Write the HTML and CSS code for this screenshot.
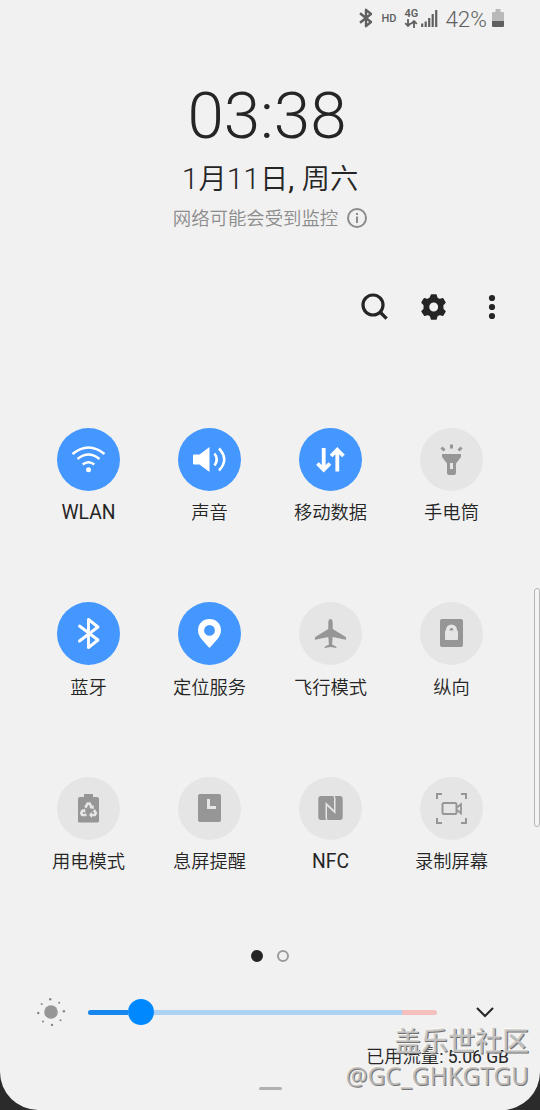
FILE: index.html
```html
<!DOCTYPE html>
<html lang="zh-CN">
<head>
<meta charset="utf-8">
<title>快捷面板</title>
<link rel="stylesheet" href="styles.css">
</head>
<body>
<main class="panel">
  <header class="status">
    <svg class="status-bt" width="16" height="20" viewBox="0 0 16 20"><path d="M2 5.200 13 14 8 18.200V1.800L13 6 2 14.800" fill="none" stroke="#606060" stroke-width="2.400" stroke-linejoin="round"/></svg>
    <span class="hd">HD</span>
    <div class="network">
      <span class="net-type">4G</span>
      <svg width="14" height="9" viewBox="0 0 14 9"><path d="M4 0v7M1.200 4.200 4 7l2.800-2.800M10 9V2M7.200 4.800 10 2l2.800 2.800" fill="none" stroke="#606060" stroke-width="1.800"/></svg>
    </div>
    <svg class="signal" width="17" height="17" viewBox="0 0 17 17"><path d="M1.200 17v-3.500M4.700 17v-5.500M8.200 17V8M11.700 17V4M15.200 17V0" stroke="#606060" stroke-width="2.200"/></svg>
    <span class="percent">42%</span>
    <svg class="battery" width="12" height="18" viewBox="0 0 12 18"><path d="M1 3h2.500V0h5v3H11q1 0 1 1v8H0V4q0-1 1-1" fill="#b9b9b9"/><path d="M0 12h12v5q0 1-1 1H1q-1 0-1-1z" fill="#606060"/></svg>
  </header>

  <section class="clock">
    <div class="time">03:38</div>
    <div class="date"><span class="num">1</span>月<span class="num">11</span>日<span class="num comma">, </span>周六</div>
    <div class="notice"><span>网络可能会受到监控</span>
      <svg width="20" height="20" viewBox="0 0 20 20"><circle cx="10" cy="10" r="9" fill="none" stroke="#8c8c8c" stroke-width="2"/><path d="M10 8.500V15M10 5v2" stroke="#8c8c8c" stroke-width="2"/></svg>
    </div>
  </section>

  <nav class="tools">
    <svg width="30" height="30" viewBox="0 0 30 30"><circle cx="13" cy="13" r="10" fill="none" stroke="#252525" stroke-width="3.200"/><path d="m20 20 6.600 6.600" stroke="#252525" stroke-width="3.400"/></svg>
    <svg width="30" height="30" viewBox="0 0 30 30"><path fill="#252525" fill-rule="evenodd" stroke="#252525" stroke-width="1.500" stroke-linejoin="round" d="M12.500 3h4.500l.9 3.200 2.500 1.500 3.400-.9 2.200 3.800-2.300 2.400v4l2.300 2.400-2.200 3.800-3.400-.9-2.500 1.500-.9 3.200h-4.500l-.9-3.200-2.500-1.500-3.400.9L3 19.400 5.300 17v-4L3 10.600l2.200-3.800 3.400.9 2.500-1.500zM14.700 9.800a5.200 5.200 0 1 0 0 10.400 5.200 5.200 0 0 0 0-10.400"/></svg>
    <svg width="30" height="30" viewBox="0 0 30 30"><g fill="#252525"><circle cx="15" cy="6" r="3.100"/><circle cx="15" cy="15" r="3.100"/><circle cx="15" cy="24" r="3.100"/></g></svg>
  </nav>

  <section class="tiles">
    <div class="tile"><span class="disc on"><svg viewBox="0 0 63 63"><g fill="none" stroke="#fff" stroke-width="2.500"><path d="M15.500 26Q31.500 13 47.500 26M20.500 31Q31.500 22 42.500 31M25.700 36.500Q31.500 32 37.300 36.500"/></g><circle cx="31.500" cy="41.700" r="2.500" fill="#fff"/></svg></span><span class="label latin">WLAN</span></div>
    <div class="tile"><span class="disc on"><svg viewBox="0 0 63 63"><path d="M16 26.500h5.500L31.500 19v25l-10-7.500H16q-1 0-1-1v-8q0-1 1-1" fill="#fff"/><path d="M36.500 25.500q4.500 6 0 12M41 20.500q10.500 11 0 22" fill="none" stroke="#fff" stroke-width="2.600"/></svg></span><span class="label">声音</span></div>
    <div class="tile"><span class="disc on"><svg viewBox="0 0 63 63"><path d="M24.700 20v21M18.500 35.500l6.200 6.200 6.200-6.200M38.300 43.500v-21M32.100 28l6.200-6.200 6.200 6.200" fill="none" stroke="#fff" stroke-width="3.800"/></svg></span><span class="label">移动数据</span></div>
    <div class="tile"><span class="disc"><svg viewBox="0 0 63 63"><path fill="#969696" fill-rule="evenodd" d="M22 26h19v3l-5 6.500v9.500q0 2-2 2h-5q-2 0-2-2v-9.500L22 29zM30 35v6h3v-6z"/><path d="M31.500 16.500v4M21.500 19.500l3 3M41.500 19.500l-3 3" stroke="#969696" stroke-width="3"/></svg></span><span class="label">手电筒</span></div>

    <div class="tile"><span class="disc on"><svg viewBox="0 0 63 63"><path d="M22.500 24 41 38l-9.500 7.500v-28L41 25 22.500 39" fill="none" stroke="#fff" stroke-width="2.900" stroke-linejoin="round" stroke-linecap="round"/></svg></span><span class="label">蓝牙</span></div>
    <div class="tile"><span class="disc on"><svg viewBox="0 0 63 63"><path fill="#fff" fill-rule="evenodd" d="M31.500 17C25 17 20 21.800 20 28.200 20 35 26 39.500 31.500 46 37 39.500 43 35 43 28.200 43 21.800 38 17 31.500 17m0 6a5.400 5.400 0 1 1 0 10.800 5.400 5.400 0 0 1 0-10.800"/></svg></span><span class="label">定位服务</span></div>
    <div class="tile"><span class="disc"><svg viewBox="0 0 63 63"><path fill="#969696" d="M31.500 17c1.600 0 2.200 1.700 2.200 4v6L46 34.500c1.400.8 1.200 1.800 1 3.200L33.700 35l-.6 7.500 3.900 2q.6.500.5 1.500l-6-1-6 1q-.1-1 .5-1.500l3.900-2-.6-7.500L16 37.700c-.2-1.400-.4-2.400 1-3.200L29.300 27v-6c0-2.300.6-4 2.200-4"/></svg></span><span class="label">飞行模式</span></div>
    <div class="tile"><span class="disc"><svg viewBox="0 0 63 63"><rect x="20" y="17" width="23" height="28" rx="2" fill="#969696"/><rect x="25" y="28.500" width="13" height="9.500" rx="1" fill="#e5e5e5"/><path d="M27.800 29.500v-1.500a3.700 3.700 0 0 1 7.400 0v1.500" fill="none" stroke="#e5e5e5" stroke-width="3.600"/></svg></span><span class="label">纵向</span></div>

    <div class="tile"><span class="disc"><svg viewBox="0 0 63 63"><path d="M23 20h4v-3h9v3h4q2 0 2 2v22q0 1.500-1.500 1.500h-18Q21 45.500 21 44V22q0-2 2-2" fill="#969696"/><g fill="none" stroke="#e5e5e5" stroke-width="2.600"><path d="M28.300 30.600 30.600 26.500h2l2.300 4.100M37 33l1.800 3.200-1 1.800h-4.500M29.500 38h-4.300l-1-1.800L26 33"/></g><path fill="#e5e5e5" d="m32 31 5 1-.5-4zM35 34.800 32 38l3 3zM23.500 33.500l4.500-1.800.5 4z"/></svg></span><span class="label">用电模式</span></div>
    <div class="tile"><span class="disc"><svg viewBox="0 0 63 63"><rect x="20" y="17" width="23" height="28" rx="2" fill="#969696"/><path d="M30.500 22v8.500H38" fill="none" stroke="#e5e5e5" stroke-width="3"/></svg></span><span class="label">息屏提醒</span></div>
    <div class="tile"><span class="disc"><svg viewBox="0 0 63 63"><path fill="#969696" d="M22 19h11.500q1.500 0 1.500 1.500V33l-8.500-8V41q0 1.200 1 2H22q-2.700 0-2.700-3V22q0-3 2.700-3M41 43H29.500Q28 43 28 41.500V29l8.500 8V21q0-1.200-1-2H41q2.700 0 2.700 3v18q0 3-2.700 3"/></svg></span><span class="label latin">NFC</span></div>
    <div class="tile"><span class="disc"><svg viewBox="0 0 63 63"><path d="M17 22v-5h5M41 17h5v5M46 41v5h-5M22 46h-5v-5" fill="none" stroke="#969696" stroke-width="2"/><rect x="22.500" y="26" width="14" height="11" rx="1.500" fill="none" stroke="#969696" stroke-width="2"/><path d="m37 30.500 4-3.300v9.200L37 33" fill="none" stroke="#969696" stroke-width="1.800"/></svg></span><span class="label">录制屏幕</span></div>
  </section>

  <div class="pager"><i class="dot current"></i><i class="dot"></i></div>

  <section class="brightness">
    <svg class="sun" width="30" height="30" viewBox="0 0 30 30"><circle cx="15" cy="15" r="6.800" fill="#969696"/><g fill="#858585"><circle cx="14.200" cy="2.200" r="1.200"/><circle cx="23.200" cy="5.800" r="1"/><circle cx="27.900" cy="14.200" r="1.200"/><circle cx="24.500" cy="23.200" r="1"/><circle cx="16" cy="27.900" r="1.200"/><circle cx="7" cy="24.500" r="1"/><circle cx="2.300" cy="16" r="1.200"/><circle cx="5.700" cy="7" r="1"/></g></svg>
    <div class="track"><span class="filled"></span><i class="knob"></i><span class="rest"></span><span class="high"></span></div>
    <svg class="chevron" width="20" height="12" viewBox="0 0 20 12"><path d="m2 2 8 8 8-8" fill="none" stroke="#252525" stroke-width="2"/></svg>
  </section>

  <footer class="usage">已用流量<span class="amount">: 5.06 GB</span></footer>
  <i class="handle"></i>
  <i class="scrollbar"></i>
  <div class="watermark"><span class="mark-name">盖乐世社区</span><span class="mark-user">@GC_GHKGTGU</span></div>
</main>
</body>
</html>
```

FILE: styles.css
```css
* { box-sizing: border-box; }
body {
  margin: 0;
  background: #2b2b2b;
  font-family: Roboto, "Noto Sans CJK SC", sans-serif;
  color: #252525;
}
svg { display: block; flex: none; }
.panel {
  position: relative;
  height: 1110px;
  overflow: hidden;
  background: #f1f1f1;
  border-radius: 0 0 38px 38px;
  display: flex;
  flex-direction: column;
}
.status {
  display: flex;
  align-items: center;
  justify-content: flex-end;
  height: 36px;
  padding-right: 36px;
  color: #606060;
}
.hd { font-size: 11px; font-weight: 500; margin: 0 8px 0 7px; }
.network { display: flex; flex-direction: column; align-items: center; padding-top: 1px; }
.net-type { font-size: 11px; font-weight: 600; line-height: 10px; }
.signal { margin: 0 7px 0 3px; }
.percent { font-size: 22.500px; font-weight: 350; line-height: 36px; margin-top: 1px; }
.battery { margin-left: 5px; }

.clock { display: flex; flex-direction: column; align-items: center; padding-top: 40px; }
.time { font-size: 65.500px; font-weight: 300; line-height: 80px; margin-right: 6px; }
.date {
  font-family: "Noto Sans CJK SC", sans-serif;
  font-size: 28.300px;
  font-weight: 350;
  height: 40px;
  line-height: 40px;
  margin-top: 1px;
  white-space: pre;
}
.num { font-family: Roboto, sans-serif; font-size: 30px; font-weight: 300; }
.comma { font-weight: 400; }
.notice { display: flex; align-items: center; gap: 9px; height: 28px; color: #8c8c8c; font-size: 18.400px; line-height: 28px; margin-top: 7px; font-weight: 350; }
.notice span { padding-top: 2px; }

.tools { display: flex; justify-content: flex-end; gap: 28.500px; padding-right: 33px; margin-top: 60px; }

.tiles {
  display: grid;
  grid-template-columns: repeat(4, 121px);
  grid-auto-rows: 174.500px;
  justify-content: center;
  margin-top: 105.500px;
}
.tile { display: flex; flex-direction: column; align-items: center; }
.disc { width: 63px; height: 63px; border-radius: 50%; background: #e5e5e5; }
.disc.on { background: #4497ff; }
.label { font-size: 18.300px; font-weight: 350; line-height: 26px; margin-top: 9.500px; white-space: nowrap; }
.latin { font-size: 19.300px; font-weight: 400; }

.pager { display: flex; justify-content: center; gap: 13.500px; height: 12px; margin-top: -1px; }
.dot { width: 12px; height: 12px; border-radius: 50%; border: 2px solid #9b9b9b; }
.dot.current { background: #252525; border-color: #252525; }

.brightness { display: flex; align-items: center; height: 30px; padding: 0 44px 0 36px; margin-top: 35px; }
.track { display: flex; align-items: center; width: 349px; height: 26px; margin-left: 22px; }
.filled, .rest, .high { height: 5px; }
.filled { width: 40px; background: #1787ef; border-radius: 3px 0 0 3px; }
.knob { width: 26px; height: 26px; border-radius: 50%; background: #0089ff; }
.rest { width: 248px; background: #add2f3; }
.high { width: 35px; background: #f4bfbd; border-radius: 0 3px 3px 0; }
.chevron { margin-left: 38px; }

.usage { align-self: flex-end; height: 26px; margin: 17px 31px 0 0; font-size: 18.300px; font-weight: 350; line-height: 26px; }
.amount { font-size: 17.500px; font-weight: 400; }
.handle { width: 23px; height: 3px; border-radius: 2px; background: #b0b0b0; align-self: center; margin-top: 17px; }
.scrollbar {
  position: absolute;
  top: 588px;
  right: 0;
  width: 6px;
  height: 239px;
  border: 1px solid #b5b5b5;
  border-radius: 3px;
  background: #f4f4f4;
}
.watermark {
  position: absolute;
  right: 11px;
  top: 1024px;
  display: flex;
  flex-direction: column;
  align-items: flex-end;
  white-space: nowrap;
}
.mark-name {
  font-size: 27px;
  line-height: 36px;
  font-weight: 500;
  color: rgba(205, 205, 205, 0.85);
  text-shadow: 1px 1px 0 #707070, -1px -1px 0 #faf7ef;
}
.mark-user {
  font-family: "Noto Sans", sans-serif;
  font-size: 24.500px;
  line-height: 32px;
  color: rgba(190, 190, 190, 0.9);
  text-shadow: 1px 1px 0 #777, -1px -1px 0 #fcf5ea;
}
```
